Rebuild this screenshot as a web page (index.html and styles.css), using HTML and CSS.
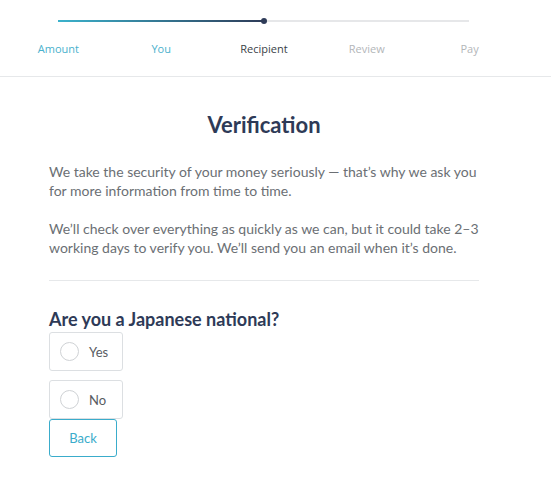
FILE: index.html
```html
<!DOCTYPE html>
<html>
<head>
    <title>Verification</title>
    <link rel="stylesheet" href="styles.css">
</head>
<body>
    <div class="header">
        <div class="steps">
            <div class="track">
                <div class="track-done"></div>
                <span class="track-dot"></span>
            </div>
            <div class="step-labels">
                <span class="step done">Amount</span>
                <span class="step done">You</span>
                <span class="step current">Recipient</span>
                <span class="step">Review</span>
                <span class="step">Pay</span>
            </div>
        </div>
    </div>

    <div class="content">
        <h1>Verification</h1>
        <p>We take the security of your money seriously — that’s why we ask you for more information from time to time.</p>
        <p>We’ll check over everything as quickly as we can, but it could take 2–3 working days to verify you. We’ll send you an email when it’s done.</p>

        <hr>

        <h2>Are you a Japanese national?</h2>
        <div class="options">
            <label class="option"><span class="radio"></span>Yes</label>
            <label class="option"><span class="radio"></span>No</label>
        </div>
        <button class="back">Back</button>
    </div>
</body>
</html>
```

FILE: styles.css
```css
:root {
    --navy: #2e3a57;
    --teal: #3aaccb;
    --text: #6b6f74;
    --line: #e6e8ea;
}

body {
    margin: 0;
    font-family: "Lato", "Open Sans", sans-serif;
    color: var(--text);
    background: #fff;
}

.header {
    height: 76px;
    border-bottom: 1px solid var(--line);
}

.steps {
    width: 514px;
    margin-left: 7px;
    padding-top: 20px;
}

.track {
    position: relative;
    height: 2px;
    margin: 0 52px 0 51px;
    background: #e6e7e9;
}

.track-done {
    width: 50%;
    height: 100%;
    background: linear-gradient(to right, #3bb2cc, #2e3b58);
}

.track-dot {
    position: absolute;
    left: 50%;
    top: -2px;
    width: 6px;
    height: 6px;
    margin-left: -3px;
    border-radius: 50%;
    background: #2e3b58;
}

.step-labels {
    display: grid;
    grid-template-columns: repeat(5, 1fr);
    margin-top: 19px;
}

.step {
    text-align: center;
    font-family: "Open Sans", sans-serif;
    font-size: 11px;
    color: #b3b6b9;
}

.step.done {
    color: #4ab1cd;
}

.step.current {
    color: #3a3f47;
}

.content {
    width: 430px;
    margin-left: 49px;
    padding-top: 33px;
}

h1 {
    margin: 0 0 22px;
    text-align: center;
    font-size: 22px;
    font-weight: 700;
    color: var(--navy);
    line-height: 30px;
}

p {
    margin: 0 0 19px;
    font-size: 14px;
    line-height: 19px;
}

hr {
    border: none;
    border-top: 1px solid var(--line);
    margin: 23px 0 26px;
}

h2 {
    margin: 0 0 1px;
    font-size: 18px;
    font-weight: 700;
    color: var(--navy);
    line-height: 24px;
}

.options {
    display: flex;
    flex-direction: column;
    align-items: flex-start;
    gap: 9px;
}

.option {
    display: flex;
    align-items: center;
    gap: 10px;
    padding-left: 10px;
    box-sizing: border-box;
    width: 74px;
    height: 39px;
    border: 1px solid #dcdfe2;
    border-radius: 3px;
    font-size: 13px;
    color: #585c62;
    cursor: pointer;
}

.radio {
    width: 17px;
    height: 17px;
    border: 1px solid #cfd2d5;
    border-radius: 50%;
}

.back {
    display: block;
    width: 68px;
    height: 38px;
    border: 1px solid var(--teal);
    border-radius: 3px;
    background: #fff;
    color: var(--teal);
    font-family: "Lato", "Open Sans", sans-serif;
    font-size: 13px;
    cursor: pointer;
}
```
